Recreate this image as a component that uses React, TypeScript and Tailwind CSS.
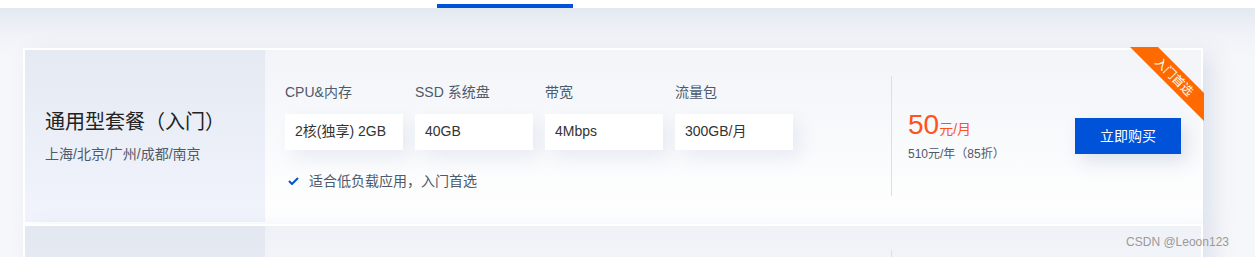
import React from "react";

const specs = [
  { label: "CPU&内存", value: "2核(独享) 2GB" },
  { label: "SSD 系统盘", value: "40GB" },
  { label: "带宽", value: "4Mbps" },
  { label: "流量包", value: "300GB/月" },
];

function PlanCard() {
  return (
    <div className="relative flex w-[1180px] h-[176px] shrink-0 border-2 border-white shadow-[10px_6px_22px_0_rgba(60,90,150,0.13)]">
      <div className="flex w-[240px] shrink-0 flex-col justify-center pl-5 bg-[linear-gradient(180deg,#e5e9f2,#f1f4fc)]">
        <div className="text-[20px] leading-7 text-[#222]">通用型套餐（入门）</div>
        <div className="mt-2 text-[14px] leading-5 text-[#4e5969]">上海/北京/广州/成都/南京</div>
      </div>
      <div className="flex flex-1 items-center bg-[linear-gradient(180deg,#f2f4f8,#ffffff)]">
        <div className="w-[626px] shrink-0 pl-5">
          <div className="flex gap-3">
            {specs.map((s) => (
              <div key={s.label} className="w-[118px]">
                <div className="text-[14px] leading-5 text-[#4e5969]">{s.label}</div>
                <div className="mt-3 flex h-9 items-center bg-white pl-[10px] text-[14px] text-[#333] shadow-[8px_8px_18px_0_rgba(60,90,150,0.09)]">
                  {s.value}
                </div>
              </div>
            ))}
          </div>
          <div className="mt-[21px] flex items-center text-[14px] leading-5 text-[#4e5969]">
            <svg width="11" height="8" viewBox="0 0 11 8" className="ml-[3px] mr-[10px]">
              <polyline points="1,4 4,7 10,1" fill="none" stroke="#0052d9" strokeWidth="2" />
            </svg>
            <span>适合低负载应用，入门首选</span>
          </div>
        </div>
        <div className="h-[120px] w-px shrink-0 bg-[#dcdfe6]" />
        <div className="flex flex-1 items-center justify-between pl-4 pr-5">
          <div>
            <div className="flex items-baseline text-[#ff5220]">
              <span className="text-[28px] leading-8">50</span>
              <span className="text-[14px]">元/月</span>
            </div>
            <div className="mt-1 text-[12px] leading-[18px] text-[#4e5969]">510元/年（85折）</div>
          </div>
          <button className="h-9 w-[106px] bg-[#0052d9] text-[14px] text-white shadow-[6px_8px_18px_0_rgba(60,90,150,0.15)]">
            立即购买
          </button>
        </div>
      </div>
      <div className="absolute right-[-3px] top-[-3px] h-[74px] w-[74px]">
        <svg width="74" height="74" viewBox="0 0 74 74" className="absolute left-0 top-0">
          <polygon points="0,0 28,0 74,46 74,74" fill="#ff6a00" />
        </svg>
        <span className="absolute left-[44px] top-[30px] -translate-x-1/2 -translate-y-1/2 rotate-45 whitespace-nowrap text-[12px] leading-[14px] text-white">
          入门首选
        </span>
      </div>
    </div>
  );
}

function NextCard() {
  return (
    <div className="relative flex w-[1180px] h-[176px] shrink-0 border-2 border-white shadow-[10px_6px_22px_0_rgba(60,90,150,0.13)]">
      <div className="w-[240px] shrink-0 bg-[linear-gradient(180deg,#e3e7f0,#f1f4fc)]" />
      <div className="flex flex-1 items-center bg-[linear-gradient(180deg,#eef1f6,#ffffff)]">
        <div className="w-[626px] shrink-0" />
        <div className="h-[124px] w-px shrink-0 bg-[#dcdfe6]" />
      </div>
    </div>
  );
}

export default function App() {
  return (
    <div className="relative h-[257px] w-full overflow-hidden bg-[linear-gradient(180deg,#e3e8f1_8px,#f1f3f8_36px,#f6f7fa_60px)] font-['Liberation_Sans','Noto_Sans_CJK_SC',sans-serif]">
      <div className="h-2 bg-white pl-[437px] pt-1">
        <div className="h-1 w-[136px] bg-[#0052d9]" />
      </div>
      <div className="flex flex-col pl-[23px] pt-10">
        <PlanCard />
        <NextCard />
      </div>
      <div className="absolute bottom-[7px] right-[26px] text-[12px] leading-4 text-[#9a9a9a]">CSDN @Leoon123</div>
    </div>
  );
}
